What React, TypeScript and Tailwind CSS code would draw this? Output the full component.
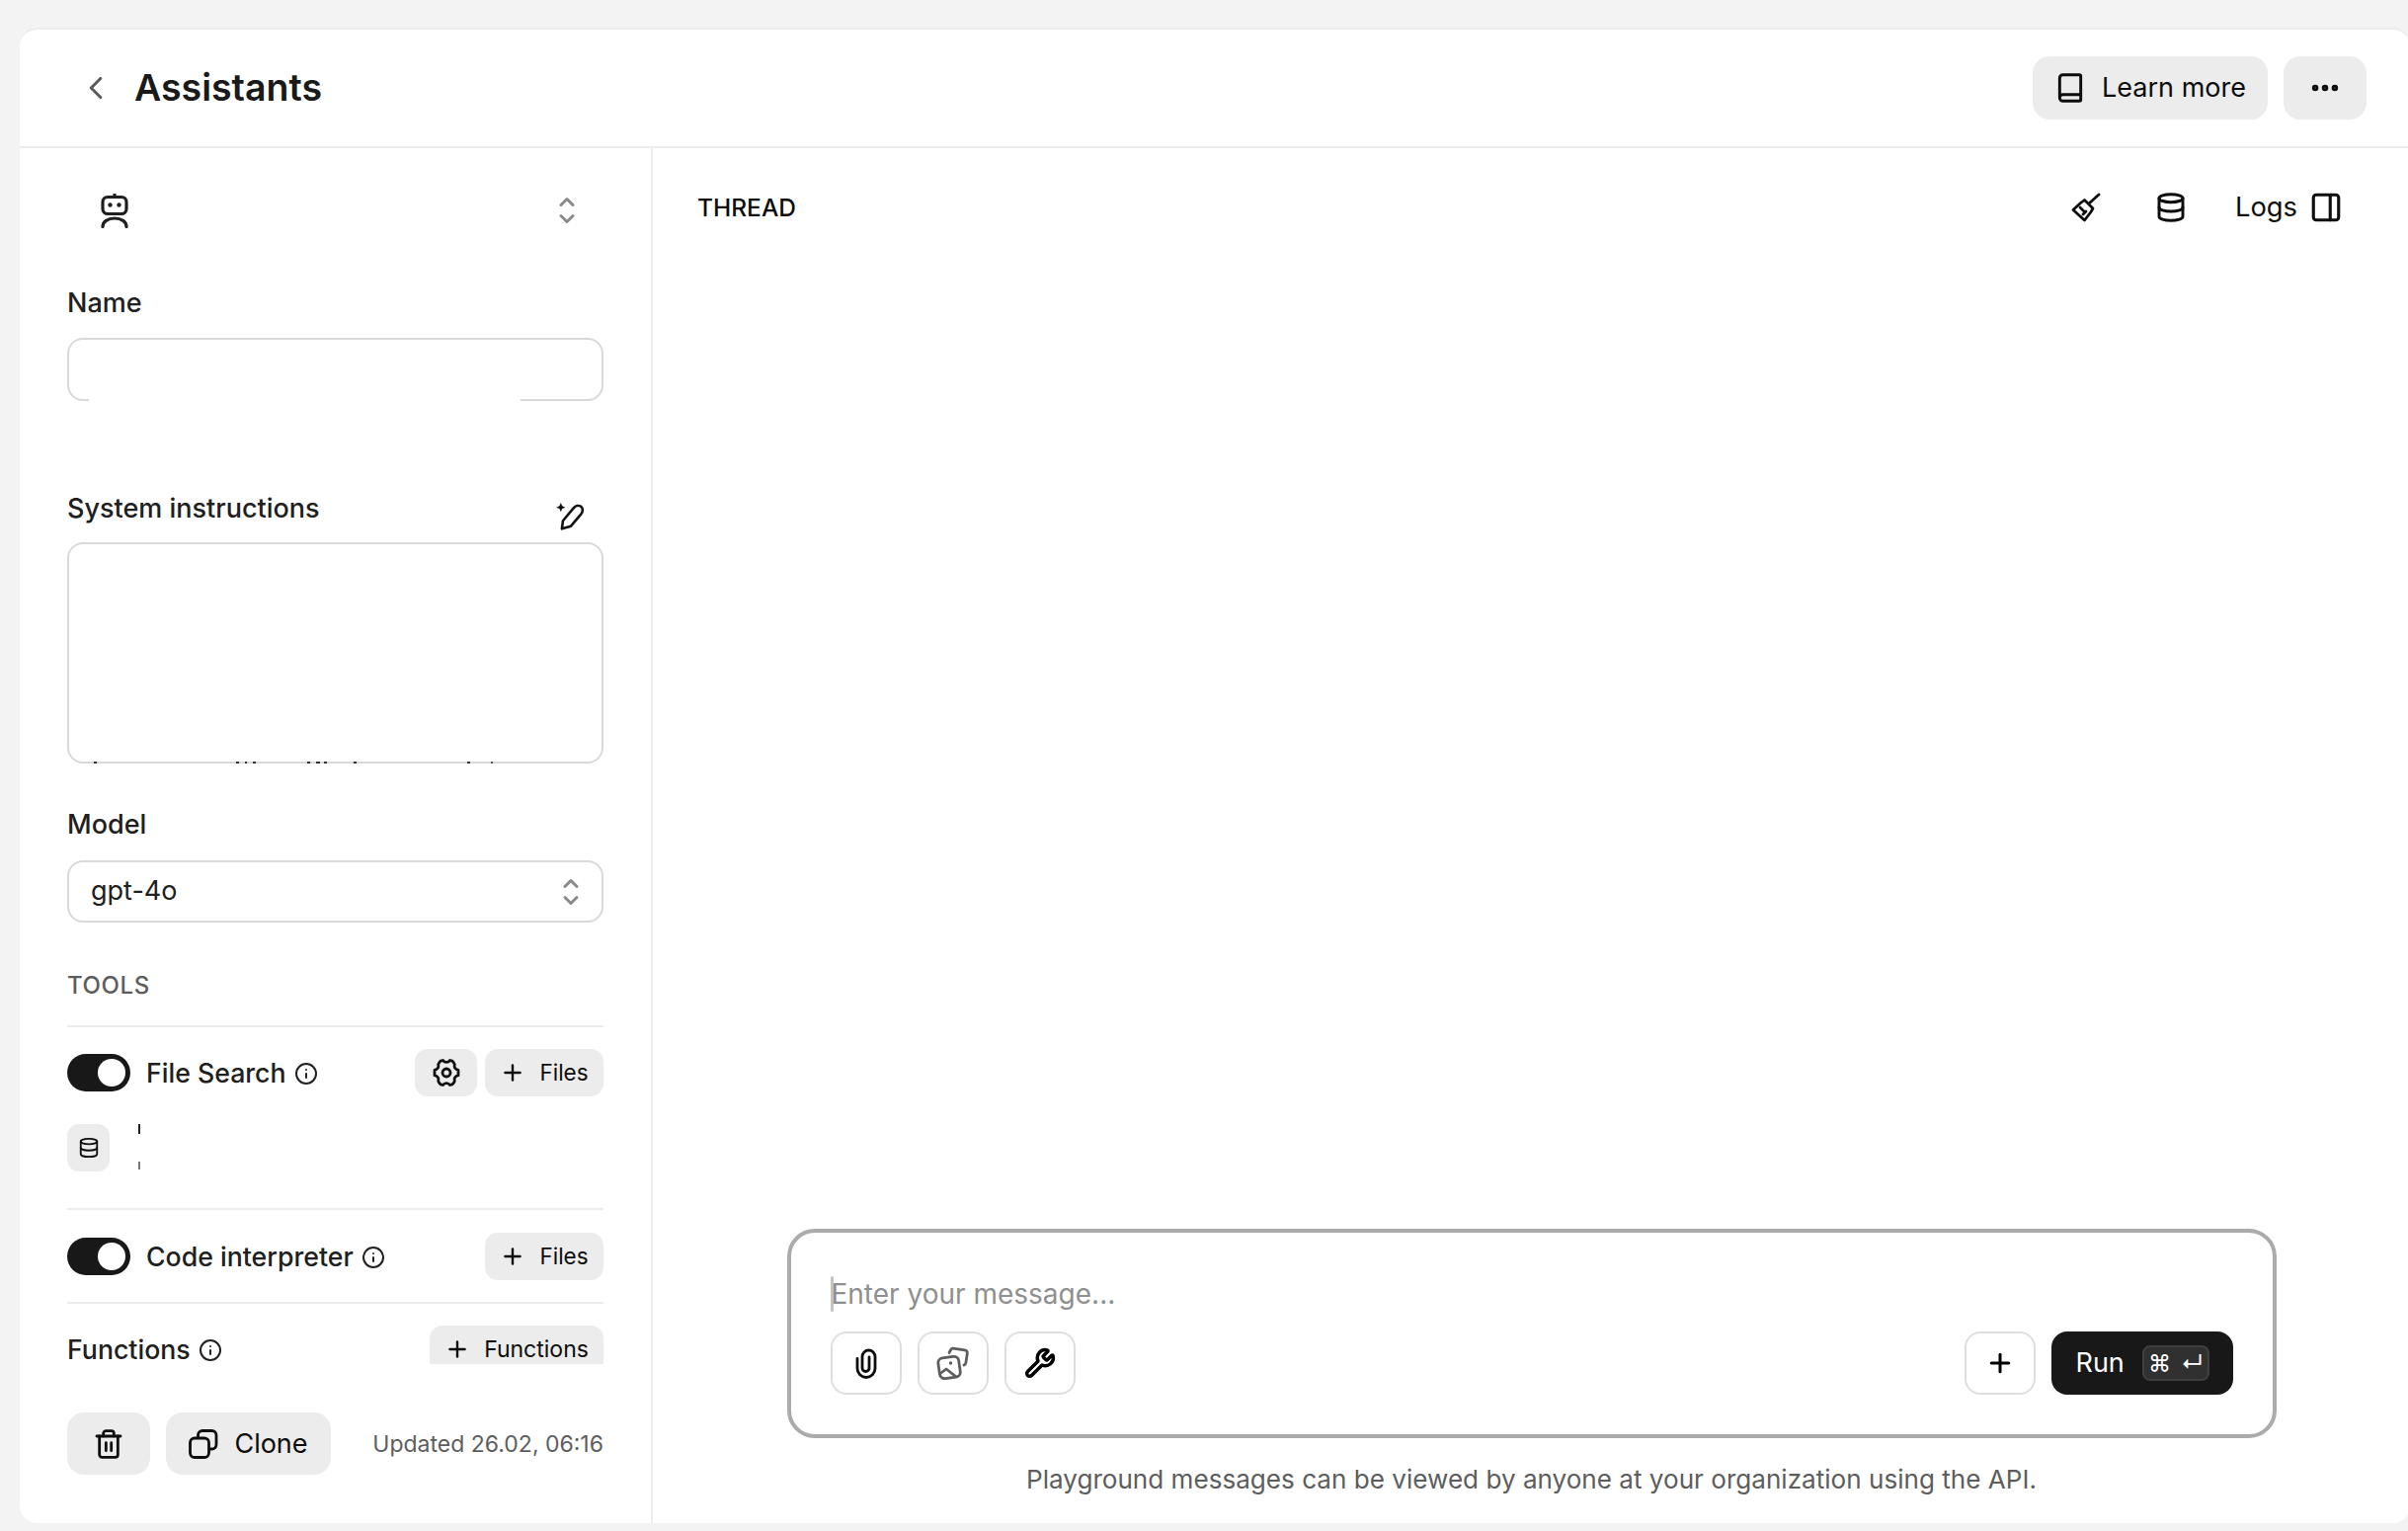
import React, { FC, ReactNode } from 'react';
import { ChevronLeft, Plus, Book, Ellipsis, Database, PanelRight, Wrench, Trash2, Info } from 'lucide-react';

const Updown: FC = () => (
    <svg width="18" height="30" viewBox="0 0 18 30" fill="none" stroke="#8a8a8a" strokeWidth="3" strokeLinecap="round" strokeLinejoin="round">
        <path d="M3 9.500 9 3.500l6 6" />
        <path d="M3 20.500l6 6 6-6" />
    </svg>
);

const Robot: FC = () => (
    <svg width="28" height="35" viewBox="0 0 28 35" fill="none" stroke="#1f1f1f" strokeWidth="3.200" strokeLinecap="round">
        <rect x="2" y="3.500" width="24" height="17" rx="5" />
        <path d="M14 1v2" />
        <circle cx="9.500" cy="11.500" r="2.200" fill="#1f1f1f" stroke="none" />
        <circle cx="18.500" cy="11.500" r="2.200" fill="#1f1f1f" stroke="none" />
        <path d="M2 33.500c0-5 5-8.500 12-8.500s12 3.500 12 8.500" />
    </svg>
);

const PenSpark: FC = () => (
    <svg width="30" height="28" viewBox="0 0 28 26" fill="none" stroke="#111" strokeWidth="2.400" strokeLinejoin="round" className="translate-y-[8px]">
        <path d="M5.500 24.500 6.500 17 16.500 5c2-2.400 5-3 7-1.500s2.200 4.500.2 7L14 22z" />
        <path d="M4.500 0l1.300 3 3 1.300-3 1.300-1.300 3-1.300-3-3-1.300 3-1.300z" fill="#111" stroke="none" />
    </svg>
);

const Gear: FC = () => (
    <svg width="28" height="32" viewBox="0 0 28 32" fill="none" stroke="#111" strokeWidth="2.800" strokeLinejoin="round">
        <path d="M10.500 3.500c1.500 2.500 5.500 2.500 7 0l2.500.7c1 1 2 2.400 2.300 3.500-1 2.800 1 5 3.700 5.600v5.400c-2.700.6-4.700 2.800-3.700 5.600-.3 1.100-1.300 2.500-2.300 3.500l-2.500.7c-1.500-2.500-5.500-2.500-7 0L8 27.800c-1-1-2-2.400-2.300-3.500 1-2.800-1-5-3.700-5.600v-5.400c2.700-.6 4.700-2.800 3.700-5.600C6 6.600 7 5.200 8 4.200z" />
        <circle cx="14" cy="16" r="4" />
    </svg>
);

const Broom: FC = () => (
    <svg width="30" height="30" viewBox="0 0 30 30" fill="none" stroke="#0d0d0d" strokeWidth="2.800" strokeLinejoin="round" strokeLinecap="round">
        <path d="M28 2 18 11" />
        <path d="M13.500 7.500 22 16l-2 3.500L13.500 28 2 17.500l7.500-7z" />
        <path d="M9 15l5 5M12 22l3-3" />
    </svg>
);

const Clip: FC = () => (
    <svg width="22" height="31" viewBox="0 0 22 31" fill="none" stroke="#0d0d0d" strokeWidth="2.800" strokeLinecap="round" strokeLinejoin="round">
        <path d="M2 10.500v10a9 9 0 0 0 18 0V8.500a6.500 6.500 0 0 0-13 0V20a3.500 3.500 0 0 0 7 0V9" />
    </svg>
);

const Images: FC = () => (
    <svg width="34" height="34" viewBox="0 0 34 34" fill="none" stroke="#5d5d5d" strokeWidth="2.800" strokeLinecap="round" strokeLinejoin="round">
        <rect x="2.500" y="11" width="21" height="21" rx="5" transform="rotate(-8 13 21)" />
        <path d="M13 6.500 15 3c.4-.7 1-1 1.800-.9l12 1.700c1.600.2 2.700 1.700 2.500 3.300l-1.300 9c-.2 1.300-.9 2.400-2 3" />
        <circle cx="14.500" cy="17" r="1.700" fill="#5d5d5d" stroke="none" />
        <path d="M4 27.500 10 23l9 7" />
    </svg>
);

const CopyIcon: FC = () => (
    <svg width="30" height="30" viewBox="0 0 30 30" fill="none" stroke="#0d0d0d" strokeWidth="2.800" strokeLinejoin="round">
        <rect x="1.500" y="9" width="19" height="19.500" rx="4.500" />
        <path d="M9.500 9V6c0-2.500 2-4.500 4.500-4.500h9.500c2.500 0 4.500 2 4.500 4.500v9.500c0 2.500-2 4.500-4.500 4.500h-3" />
    </svg>
);

const Toggle: FC = () => (
    <div className="flex h-[38px] w-[64px] items-center justify-end rounded-full bg-[#181818] pr-[5px]">
        <div className="h-[28px] w-[28px] rounded-full bg-white" />
    </div>
);

const GrayButton: FC<{ children: ReactNode; className?: string }> = ({ children, className }) => (
    <button className={`flex items-center justify-center bg-[#ececec] text-[#0d0d0d] ${className ?? ''}`}>{children}</button>
);

const FilesButton: FC = () => (
    <GrayButton className="h-[48px] w-[120px] gap-[14px] rounded-[13px] text-[22.500px]">
        <Plus size={26} strokeWidth={2.200} />
        <span>Files</span>
    </GrayButton>
);

const OutlineButton: FC<{ children: ReactNode; className?: string }> = ({ children, className }) => (
    <button className={`flex h-[64px] items-center justify-center rounded-[16px] border-2 border-[#dedede] bg-white ${className ?? ''}`}>{children}</button>
);

const Label: FC<{ children: ReactNode; className?: string }> = ({ children, className }) => (
    <div className={`flex h-[34px] items-center text-[27px] font-medium text-[#202020] ${className ?? ''}`}>{children}</div>
);

const ToolLabel: FC<{ name: string }> = ({ name }) => (
    <div className="flex h-[28px] items-center gap-[8px] text-[26.700px] leading-[28px] font-medium text-[#202020]">
        <span>{name}</span>
        <Info size={24} strokeWidth={2} className="mt-[2px]" />
    </div>
);

export default function App() {
    return (
        <div className="h-screen w-screen overflow-hidden bg-[#f3f3f3] pt-[28px] pl-[20px] font-['Inter',sans-serif]">
            <div className="flex h-[1514px] w-[2420px] flex-col overflow-hidden rounded-[18px] border-t-2 border-[#ececec] bg-white">
                {/* Header */}
                <header className="flex h-[120px] shrink-0 items-center justify-between border-b-2 border-[#ececec] pr-[44px] pl-[58px]">
                    <div className="flex items-center gap-[20px]">
                        <ChevronLeft size={38} strokeWidth={2} className="text-[#5d5d5d]" />
                        <h1 className="text-[37.500px] font-semibold text-[#1a1a1a]">Assistants</h1>
                    </div>
                    <div className="flex items-center gap-[16px]">
                        <GrayButton className="h-[64px] w-[238px] gap-[16px] rounded-[17px] text-[27px]">
                            <Book size={32} strokeWidth={2.200} />
                            <span>Learn more</span>
                        </GrayButton>
                        <GrayButton className="h-[64px] w-[84px] rounded-[17px]">
                            <Ellipsis size={34} strokeWidth={2.600} />
                        </GrayButton>
                    </div>
                </header>

                <div className="flex min-h-0 flex-1">
                    {/* Sidebar */}
                    <aside className="flex w-[641px] shrink-0 flex-col border-r-2 border-[#ececec] px-[48px]">
                        <div className="h-[1231px] shrink-0 overflow-hidden">
                            <div className="mt-[31px] flex h-[64px] items-center justify-between pr-[28px] pl-[34px]">
                                <Robot />
                                <Updown />
                            </div>

                            <Label className="mt-[45px]">Name</Label>
                            <div className="relative mt-[18px] h-[64px] rounded-[16px] border-2 border-[#d9d9d9]">
                                <div className="absolute -bottom-[2px] left-[20px] h-[2px] w-[437px] bg-white" />
                            </div>

                            <div className="mt-[92px] flex h-[34px] items-center justify-between pr-[18px]">
                                <Label>System instructions</Label>
                                <PenSpark />
                            </div>
                            <div className="relative mt-[17px] h-[224px] rounded-[16px] border-2 border-[#d9d9d9]">
                                {/* bits of the line cut off at the bottom of the box */}
                                <div className="absolute -bottom-[2px] left-[25px] flex h-[2px] items-start">
                                    <div className="h-[2px] w-[3px] bg-[#333]" />
                                    <div className="ml-[141px] h-[2px] w-[3px] bg-[#333]" />
                                    <div className="ml-[6px] h-[2px] w-[2px] bg-[#333]" />
                                    <div className="ml-[6px] h-[2px] w-[3px] bg-[#333]" />
                                    <div className="ml-[52px] h-[2px] w-[3px] bg-[#333]" />
                                    <div className="ml-[6px] h-[2px] w-[4px] bg-[#333]" />
                                    <div className="ml-[4px] h-[2px] w-[3px] bg-[#333]" />
                                    <div className="ml-[27px] h-[2px] w-[3px] bg-[#333]" />
                                    <div className="ml-[112px] h-[2px] w-[3px] bg-[#333]" />
                                    <div className="ml-[21px] h-[2px] w-[2px] bg-[#555]" />
                                </div>
                            </div>

                            <Label className="mt-[45px]">Model</Label>
                            <div className="mt-[19px] flex h-[63px] items-center justify-between rounded-[16px] border-2 border-[#d9d9d9] pr-[22px] pl-[22px] text-[27px] text-[#202020]">
                                <span>gpt-4o</span>
                                <Updown />
                            </div>

                            <div className="mt-[47px] flex h-[34px] items-center text-[24px] font-medium tracking-[0.6px] text-[#5d5d5d]">TOOLS</div>
                            <div className="mt-[23px] h-[2px] bg-[#ececec]" />

                            <div className="mt-[22px] flex h-[48px] items-center justify-between">
                                <div className="flex items-center gap-[16px]">
                                    <Toggle />
                                    <ToolLabel name="File Search" />
                                </div>
                                <div className="flex items-center gap-[8px]">
                                    <GrayButton className="h-[48px] w-[63px] rounded-[13px]">
                                        <Gear />
                                    </GrayButton>
                                    <FilesButton />
                                </div>
                            </div>
                            <div className="mt-[28px] flex h-[48px] items-start gap-[29px]">
                                <GrayButton className="h-[48px] w-[43px] rounded-[12px]">
                                    <Database size={22} strokeWidth={2} />
                                </GrayButton>
                                {/* bits of a redacted file name */}
                                <div className="flex h-[46px] w-[3px] flex-col justify-between">
                                    <div className="h-[10px] w-[2px] bg-[#222]" />
                                    <div className="h-[8px] w-[2px] bg-[#777]" />
                                </div>
                            </div>
                            <div className="mt-[37px] h-[2px] bg-[#ececec]" />

                            <div className="mt-[23px] flex h-[48px] items-center justify-between">
                                <div className="flex items-center gap-[16px]">
                                    <Toggle />
                                    <ToolLabel name="Code interpreter" />
                                </div>
                                <FilesButton />
                            </div>
                            <div className="mt-[22px] h-[2px] bg-[#ececec]" />

                            <div className="mt-[22px] flex h-[39px] items-start justify-between">
                                <div className="mt-[10px]">
                                    <ToolLabel name="Functions" />
                                </div>
                                <GrayButton className="h-[39px] w-[176px] gap-[14px] rounded-t-[13px] pt-[9px] text-[23px] leading-[30px]">
                                    <Plus size={26} strokeWidth={2.200} />
                                    <span>Functions</span>
                                </GrayButton>
                            </div>
                        </div>

                        <div className="mt-[49px] flex items-center justify-between">
                            <div className="flex items-center gap-[16px]">
                                <GrayButton className="h-[63px] w-[84px] rounded-[17px]">
                                    <Trash2 size={32} strokeWidth={2.100} />
                                </GrayButton>
                                <GrayButton className="h-[63px] w-[167px] gap-[16px] rounded-[17px] text-[27px]">
                                    <CopyIcon />
                                    <span className="pt-[2px]">Clone</span>
                                </GrayButton>
                            </div>
                            <span className="pt-[2px] text-[23px] text-[#5d5d5d]">Updated 26.02, 06:16</span>
                        </div>
                    </aside>

                    {/* Thread */}
                    <main className="flex min-w-0 flex-1 flex-col">
                        <div className="mt-[40px] flex h-[40px] items-center justify-between pr-[68px] pl-[45px]">
                            <span className="text-[24.500px] font-medium text-[#0d0d0d]">THREAD</span>
                            <div className="flex items-center text-[#0d0d0d]">
                                <Broom />
                                <Database size={32} strokeWidth={2.200} className="ml-[55px]" />
                                <span className="ml-[49px] text-[27.300px]">Logs</span>
                                <PanelRight size={34} strokeWidth={2.200} className="ml-[12px]" />
                            </div>
                        </div>

                        <div className="flex-1" />

                        <div className="mx-auto flex h-[212px] w-[1508px] flex-col rounded-[28px] border-4 border-[#ababab] px-[40px]">
                            <div className="mt-[44px] flex h-[36px] items-center">
                                <div className="h-[36px] w-[3px] rounded-full bg-[#c4c4c4]" />
                                <span className="-ml-[2px] text-[28px] text-[#8f8f8f]">Enter your message...</span>
                            </div>
                            <div className="mt-[20px] flex items-center justify-between">
                                <div className="flex items-center gap-[16px]">
                                    <OutlineButton className="w-[72px]">
                                        <Clip />
                                    </OutlineButton>
                                    <OutlineButton className="w-[72px]">
                                        <Images />
                                    </OutlineButton>
                                    <OutlineButton className="w-[72px]">
                                        <Wrench size={32} strokeWidth={2.600} />
                                    </OutlineButton>
                                </div>
                                <div className="flex items-center gap-[16px]">
                                    <OutlineButton className="w-[72px]">
                                        <Plus size={30} strokeWidth={2.400} />
                                    </OutlineButton>
                                    <button className="flex h-[64px] w-[184px] items-center rounded-[16px] bg-[#181818] pl-[25px] text-[27px] text-white">
                                        <span>Run</span>
                                        <span className="ml-[18px] flex h-[36px] w-[68px] items-center justify-center gap-[10px] rounded-[8px] border-2 border-[#3f3f3f] bg-[#303030] text-[23px]">
                                            <span>⌘</span>
                                            <span>↵</span>
                                        </span>
                                    </button>
                                </div>
                            </div>
                        </div>
                        <p className="mt-[25px] mb-[27px] h-[34px] text-center text-[26.100px] leading-[34px] text-[#5d5d5d]">
                            Playground messages can be viewed by anyone at your organization using the API.
                        </p>
                    </main>
                </div>
            </div>
        </div>
    );
}
